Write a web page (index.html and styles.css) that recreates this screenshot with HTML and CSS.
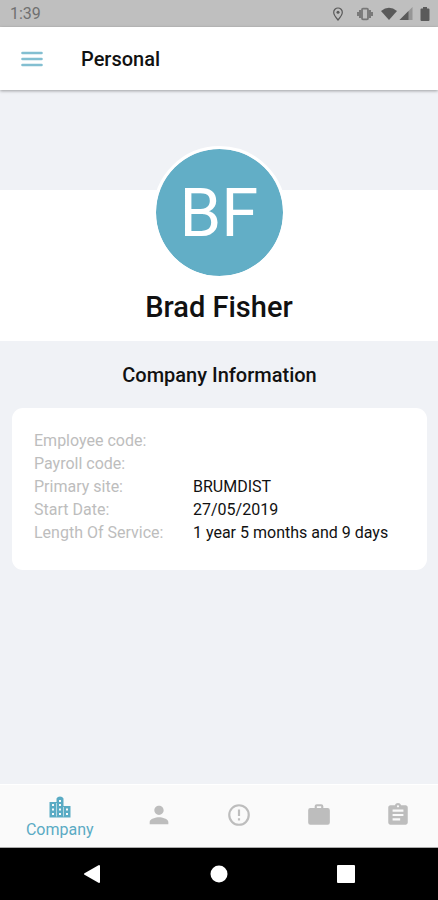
FILE: index.html
```html
<!DOCTYPE html>
<html lang="en">
<head>
  <meta charset="utf-8">
  <meta name="viewport" content="width=device-width, initial-scale=1">
  <title>Personal</title>
  <link rel="stylesheet" href="styles.css">
</head>
<body>
  <div class="status-bar">
    <span class="clock">1:39</span>
    <div class="status-icons">
      <svg class="icon-location" width="12" height="14" viewBox="0 0 12 14" aria-hidden="true"><path d="M6 1a4.300 4.300 0 0 0-4.300 4.300C1.700 8.200 6 13 6 13s4.300-4.800 4.300-7.700A4.300 4.300 0 0 0 6 1z" fill="none" stroke="currentColor" stroke-width="1.200"/><circle cx="6" cy="5.300" r="1.500" fill="currentColor"/></svg>
      <svg class="icon-vibrate" width="16" height="14" viewBox="0 0 16 14" aria-hidden="true"><rect x="5" y="1.700" width="6" height="10.600" rx="1" fill="none" stroke="currentColor" stroke-width="1.800"/><path d="M3 3v8M13 3v8M1 5v4M15 5v4" stroke="currentColor" stroke-width="1.900"/></svg>
      <svg class="icon-wifi" width="16" height="14" viewBox="0 0 16 14" aria-hidden="true"><path d="M0 4Q8-2.500 16 4L8 13z" fill="currentColor"/></svg>
      <svg class="icon-signal" width="14" height="14" viewBox="0 0 14 14" aria-hidden="true"><path d="M13.500 0v13H.5z" fill="currentColor" opacity=".4"/><path d="M9.500 4v9H.5z" fill="currentColor"/></svg>
      <svg class="icon-battery" width="10" height="14" viewBox="0 0 10 14" aria-hidden="true"><path d="M3 0h4v1.500h1.500q1 0 1 1V13q0 1-1 1h-7q-1 0-1-1V2.500q0-1 1-1H3z" fill="currentColor"/></svg>
    </div>
  </div>

  <header class="app-bar">
    <button class="menu-button" type="button" aria-label="Menu">
      <svg width="22" height="16" viewBox="0 0 22 16" aria-hidden="true"><path d="M1.500 2h19M1.500 8h19M1.500 14h19" stroke="currentColor" stroke-width="2.600" stroke-linecap="round"/></svg>
    </button>
    <h1 class="app-title">Personal</h1>
  </header>

  <main class="content">
    <section class="profile">
      <div class="avatar">BF</div>
      <h2 class="name">Brad Fisher</h2>
    </section>

    <section class="company" id="company">
      <h3 class="section-title">Company Information</h3>
      <dl class="card">
        <dt>Employee code:</dt><dd></dd>
        <dt>Payroll code:</dt><dd></dd>
        <dt>Primary site:</dt><dd>BRUMDIST</dd>
        <dt>Start Date:</dt><dd>27/05/2019</dd>
        <dt>Length Of Service:</dt><dd>1 year 5 months and 9 days</dd>
      </dl>
    </section>
  </main>

  <nav class="tabs" aria-label="Sections">
    <a class="tab tab-active" href="#company" aria-current="page">
      <svg width="22" height="22" viewBox="0 0 22 22" aria-hidden="true"><path fill="currentColor" fill-rule="evenodd" d="M.5 6h7V2.500Q8.500.5 11 .5t3.500 2V10h7v11.500H.5zM3 8v2h2V8zm0 4.500v2h2v-2zM3 17v2h2v-2zm7-13v2h2V4zm0 4v2h2V8zm0 4.500v2h2v-2zm0 4.500v2h2v-2zm7-4.500v2h2v-2zm0 4.500v2h2v-2z"/><path d="M7.500 7v13.500M14.500 11v9.500" stroke="#fafafa" stroke-width=".8" opacity=".7"/></svg>
      <span>Company</span>
    </a>
    <a class="tab" href="#personal" aria-label="Personal">
      <svg width="28" height="28" viewBox="0 0 24 24" aria-hidden="true"><path fill="currentColor" d="M12 12c2.210 0 4-1.790 4-4s-1.790-4-4-4-4 1.790-4 4 1.790 4 4 4zm0 2c-2.670 0-8 1.340-8 4v2h16v-2c0-2.660-5.330-4-8-4z"/></svg>
    </a>
    <a class="tab" href="#emergency" aria-label="Emergency">
      <svg width="26" height="26" viewBox="0 0 24 24" aria-hidden="true"><path fill="currentColor" d="M11 15h2v2h-2zm0-8h2v6h-2zm1-5C6.470 2 2 6.500 2 12a10 10 0 1 0 10-10zm0 18a8 8 0 1 1 0-16 8 8 0 0 1 0 16z"/></svg>
    </a>
    <a class="tab" href="#job" aria-label="Job">
      <svg width="26" height="26" viewBox="0 0 24 24" aria-hidden="true"><path fill="currentColor" d="M10 2h4a2 2 0 0 1 2 2v1.500h4a2 2 0 0 1 2 2V19a2 2 0 0 1-2 2H4a2 2 0 0 1-2-2V7.500a2 2 0 0 1 2-2h4V4a2 2 0 0 1 2-2zm4 3.500V4h-4v1.500z"/></svg>
    </a>
    <a class="tab" href="#records" aria-label="Records">
      <svg width="26" height="26" viewBox="0 0 24 24" aria-hidden="true"><path fill="currentColor" d="M19 3h-4.180C14.400 1.840 13.300 1 12 1c-1.300 0-2.400.84-2.820 2H5c-1.100 0-2 .9-2 2v14c0 1.100.9 2 2 2h14c1.100 0 2-.9 2-2V5c0-1.100-.9-2-2-2zm-7 0c.55 0 1 .45 1 1s-.45 1-1 1-1-.45-1-1 .45-1 1-1zm2 14H7v-2h7v2zm3-4H7v-2h10v2zm0-4H7V7h10v2z"/></svg>
    </a>
  </nav>

  <div class="system-nav">
    <button type="button" aria-label="Back"><svg width="18" height="20" viewBox="0 0 18 20" aria-hidden="true"><path d="M16 2v16L2 10z" fill="currentColor" stroke="currentColor" stroke-width="2" stroke-linejoin="round"/></svg></button>
    <button type="button" aria-label="Home"><svg width="18" height="18" viewBox="0 0 18 18" aria-hidden="true"><circle cx="9" cy="9" r="8.500" fill="currentColor"/></svg></button>
    <button type="button" aria-label="Recent apps"><svg width="18" height="18" viewBox="0 0 18 18" aria-hidden="true"><rect width="18" height="18" rx="1" fill="currentColor"/></svg></button>
  </div>
</body>
</html>
```

FILE: styles.css
```css
* {
  box-sizing: border-box;
}

body {
  margin: 0;
  min-height: 100vh;
  display: flex;
  flex-direction: column;
  background: #f0f2f6;
  color: #111;
  font-family: Roboto, "Liberation Sans", sans-serif;
}

h1, h2, h3, dl, dd {
  margin: 0;
}

button {
  display: flex;
  padding: 0;
  border: 0;
  background: none;
  color: inherit;
}

svg {
  display: block;
}

.status-bar {
  display: flex;
  align-items: center;
  justify-content: space-between;
  height: 27px;
  padding: 0 8px 0 10px;
  background: #bfbfbf;
  color: #5a5a5a;
}

.clock {
  font-size: 16px;
  color: #707070;
}

.status-icons {
  display: flex;
  align-items: center;
}

.icon-vibrate {
  margin: 0 8px 0 13px;
  color: #777;
}

.icon-signal {
  margin: 0 7px 0 2px;
}

.app-bar {
  position: relative;
  z-index: 1;
  display: flex;
  align-items: center;
  gap: 38px;
  height: 63px;
  padding: 0 21px;
  background: #fff;
  box-shadow: 0 1px 3px rgba(0, 0, 0, 0.35);
}

.menu-button {
  color: #83bfd1;
}

.app-title {
  font-size: 20px;
  font-weight: 500;
}

.content {
  flex: 1;
}

.profile {
  display: flex;
  flex-direction: column;
  align-items: center;
  padding: 56px 16px 16px;
  background: linear-gradient(#f0f2f6 100px, #fff 100px);
}

.avatar {
  display: flex;
  align-items: center;
  justify-content: center;
  width: 133px;
  height: 133px;
  border: 3px solid #fff;
  border-radius: 50%;
  background: #62aec6;
  background-clip: padding-box;
  color: #fff;
  font-size: 67px;
}

.name {
  margin-top: 10px;
  font-size: 29px;
  font-weight: 500;
  line-height: 36px;
}

.company {
  padding: 21px 11px 20px 12px;
}

.section-title {
  font-size: 20px;
  font-weight: 500;
  line-height: 26px;
  text-align: center;
}

.card {
  display: grid;
  grid-template-columns: 3fr 4fr;
  grid-auto-rows: 23px;
  row-gap: 0;
  margin-top: 20px;
  padding: 21px 22px 26px;
  border-radius: 11px;
  background: #fff;
  font-size: 16px;
  line-height: 23px;
}

.card dt {
  color: #bdbdbd;
}

.tabs {
  display: flex;
  height: 64px;
  border-top: 1px solid #fff;
  border-bottom: 1px solid #aaa;
  background: #fafafa;
}

.tab {
  flex: 2;
  display: flex;
  flex-direction: column;
  align-items: center;
  justify-content: center;
  padding-bottom: 3px;
  color: #bdbdbd;
  font-size: 16px;
  line-height: 20px;
  text-decoration: none;
}

.tab-active {
  flex: 3;
  gap: 2px;
  padding: 4px 0 0;
  color: #5aabc4;
}

.system-nav {
  display: flex;
  height: 52px;
  padding: 0 28px;
  background: #000;
  color: #fff;
}

.system-nav button {
  flex: 1;
  align-items: center;
  justify-content: center;
}
```
